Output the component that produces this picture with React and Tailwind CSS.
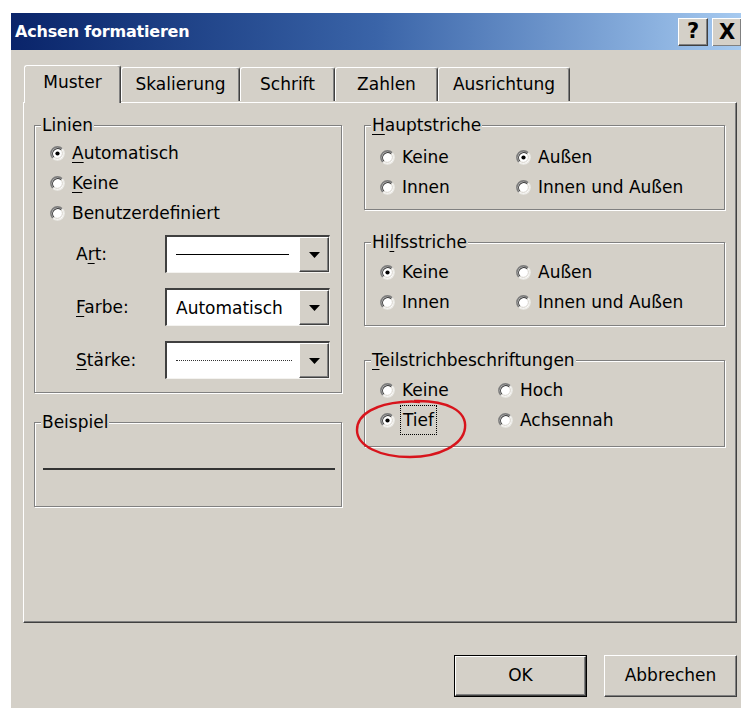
import React from 'react';

// small helper for the underlined access key letter
function Acc({ children }) {
  return <span className="underline underline-offset-[3px] decoration-1">{children}</span>;
}

function RadioDot({ checked }) {
  return (
    <svg width="15" height="15" viewBox="0 0 15 15" className="shrink-0">
      <circle cx="7.5" cy="7.5" r="6.6" fill="#ffffff" />
      <path d="M2.83 12.17 A6.6 6.6 0 0 1 12.17 2.83" stroke="#7c7c7c" strokeWidth="1.6" fill="none" />
      <path d="M3.9 11.1 A5.1 5.1 0 0 1 11.1 3.9" stroke="#3c3c3c" strokeWidth="1.1" fill="none" />
      <path d="M12.17 2.83 A6.6 6.6 0 0 1 2.83 12.17" stroke="#ecebe7" strokeWidth="1.4" fill="none" />
      <path d="M11.1 3.9 A5.1 5.1 0 0 1 3.9 11.1" stroke="#d4d0c8" strokeWidth="1" fill="none" />
      {checked && <circle cx="7.5" cy="7.5" r="2.1" fill="#000000" />}
    </svg>
  );
}

function Radio({ checked, children, gap = 'gap-[7px]' }) {
  return (
    <div className={`h-[30px] flex items-center ${gap}`}>
      <RadioDot checked={checked} />
      <span className="leading-[20px] whitespace-nowrap">{children}</span>
    </div>
  );
}

function Group({ title, className, children }) {
  return (
    <fieldset className={`border border-[#808080] shadow-[inset_1px_1px_0_#ffffff,1px_1px_0_#ffffff] ${className}`}>
      <legend className="ml-[6px] px-[1px] leading-[20px] bg-[#d4d0c8]">{title}</legend>
      {children}
    </fieldset>
  );
}

function DropArrow() {
  return (
    <svg width="11" height="6" viewBox="0 0 11 6">
      <polygon points="0,0 11,0 5.5,6" fill="#000000" />
    </svg>
  );
}

function Combo({ children }) {
  return (
    <div className="w-[165px] h-[38px] flex border-t-2 border-l-2 border-t-[#404040] border-l-[#404040] border-b border-r border-b-[#f4f3f0] border-r-[#f4f3f0] bg-white">
      <div className="flex-1 flex items-center pl-[9px] overflow-hidden">{children}</div>
      <div className="w-[30px] bg-[#d4d0c8] border-t border-l border-white border-r border-b border-r-[#404040] border-b-[#404040] shadow-[inset_-1px_-1px_0_#808080] flex items-center justify-center">
        <DropArrow />
      </div>
    </div>
  );
}

function ComboRow({ label, children }) {
  return (
    <div className="flex items-center pl-[41px]">
      <span className="w-[89px] leading-[20px]">{label}</span>
      <Combo>{children}</Combo>
    </div>
  );
}

function TitleBar() {
  return (
    <div className="h-[37px] shrink-0 flex items-center pl-[4px] bg-linear-to-r from-[#0a246a] via-[#3a64a8] to-[#a6caf0]">
      <span className="text-white font-bold text-[16px] tracking-[-0.2px]">Achsen formatieren</span>
      <div className="ml-auto flex gap-[4px]">
        <div className="w-[30px] h-[28px] bg-[#d4d0c8] border-t border-l border-white border-r border-b border-r-[#404040] border-b-[#404040] shadow-[inset_-1px_-1px_0_#808080] flex items-center justify-center font-bold text-[21px] leading-none">
          ?
        </div>
        <div className="w-[29px] h-[28px] bg-[#d4d0c8] border-t border-l border-white shadow-[inset_-1px_-1px_0_#808080] flex items-center justify-center font-bold text-[21px] leading-none">
          X
        </div>
      </div>
    </div>
  );
}

const tabs = [
  { name: 'Muster', w: 'w-[97px]' },
  { name: 'Skalierung', w: 'w-[119px]' },
  { name: 'Schrift', w: 'w-[95px]' },
  { name: 'Zahlen', w: 'w-[103px]' },
  { name: 'Ausrichtung', w: 'w-[132px]' },
];

function TabStrip() {
  return (
    <div className="relative z-10 mt-[15px] pl-[1px] flex items-end">
      {tabs.map((t, i) =>
        i === 0 ? (
          <div
            key={t.name}
            className={`${t.w} h-[38px] -mb-px bg-[#d4d0c8] rounded-t-[3px] border-t border-l border-white border-r border-r-[#404040] shadow-[inset_-1px_0_0_#808080] flex items-center justify-center pb-[3px]`}
          >
            {t.name}
          </div>
        ) : (
          <div
            key={t.name}
            className={`${t.w} h-[34px] mb-px rounded-t-[3px] border-t border-l border-white border-r border-r-[#404040] shadow-[inset_-1px_0_0_#808080] flex items-center justify-center`}
          >
            {t.name}
          </div>
        )
      )}
    </div>
  );
}

function Panel() {
  return (
    <div className="relative h-[521px] border-t border-l border-white border-r border-b border-r-[#404040] border-b-[#404040] shadow-[inset_-1px_-1px_0_#808080] flex gap-[22px] pl-[10px] pt-[12px]">
      {/* left column */}
      <div className="w-[308px] flex flex-col">
        <Group title="Linien" className="h-[278px]">
          <div className="pl-[15px] pt-[3px]">
            <Radio checked><Acc>A</Acc>utomatisch</Radio>
            <Radio><Acc>K</Acc>eine</Radio>
            <Radio>Benutzerdefiniert</Radio>
          </div>
          <div className="mt-[7px] flex flex-col gap-[15px]">
            <ComboRow label={<>A<Acc>r</Acc>t:</>}>
              <div className="w-[113px] h-px bg-black" />
            </ComboRow>
            <ComboRow label={<><Acc>F</Acc>arbe:</>}>
              <span className="leading-[20px] whitespace-nowrap">Automatisch</span>
            </ComboRow>
            <ComboRow label={<><Acc>S</Acc>tärke:</>}>
              <div className="w-[116px] border-t border-dotted border-[#333333]" />
            </ComboRow>
          </div>
        </Group>
        <Group title="Beispiel" className="mt-[19px] h-[95px]">
          <div className="mt-[36px] ml-[8px] w-[292px] h-[2px] bg-[#333333]" />
        </Group>
      </div>

      {/* right column */}
      <div className="w-[361px] flex flex-col">
        <Group title={<><Acc>H</Acc>auptstriche</>} className="h-[95px]">
          <div className="pl-[15px] pt-[7px] grid grid-cols-[136px_1fr]">
            <Radio>Keine</Radio>
            <Radio checked>Außen</Radio>
            <Radio>Innen</Radio>
            <Radio>Innen und Außen</Radio>
          </div>
        </Group>
        <Group title={<>Hi<Acc>l</Acc>fsstriche</>} className="mt-[22px] h-[94px]">
          <div className="pl-[15px] pt-[5px] grid grid-cols-[136px_1fr]">
            <Radio checked>Keine</Radio>
            <Radio>Außen</Radio>
            <Radio>Innen</Radio>
            <Radio>Innen und Außen</Radio>
          </div>
        </Group>
        <Group title={<><Acc>T</Acc>eilstrichbeschriftungen</>} className="mt-[24px] h-[97px]">
          <div className="pl-[15px] pt-[5px] grid grid-cols-[118px_1fr]">
            <Radio>Keine</Radio>
            <Radio>Hoch</Radio>
            <Radio checked gap="gap-[5px]">
              <span className="border border-dotted border-black px-[2px] py-[4px]">Tief</span>
            </Radio>
            <Radio>Achsennah</Radio>
          </div>
        </Group>
      </div>

      {/* red marker ring drawn over the "Tief" option */}
      <svg
        className="absolute left-[330px] top-[294px] pointer-events-none"
        width="118"
        height="64"
        viewBox="0 0 118 64"
      >
        <path
          d="M60 4 C93 3 113 14 111 31 C109 48 85 60 56 60 C26 60 3 49 3 33 C3 16 24 7 48 5 C54 4.5 60 4.3 66 5"
          stroke="#d8141c"
          strokeWidth="2.4"
          fill="none"
        />
      </svg>
    </div>
  );
}

function DialogButton({ isDefault, children }) {
  if (isDefault) {
    return (
      <div className="border border-black">
        <div className="w-[131px] h-[40px] border-t border-l border-white border-r border-b border-r-[#404040] border-b-[#404040] shadow-[inset_-1px_-1px_0_#808080] flex items-center justify-center">
          {children}
        </div>
      </div>
    );
  }
  return (
    <div className="w-[133px] h-[42px] border-t border-l border-white border-r border-b border-r-[#404040] border-b-[#404040] shadow-[inset_-1px_-1px_0_#808080] flex items-center justify-center">
      {children}
    </div>
  );
}

export default function App() {
  return (
    <div className="w-[741px] h-[708px] overflow-hidden bg-white pt-[13px] pl-[11px] font-['DejaVu_Sans',sans-serif] text-[17px] text-black">
      <div className="h-full flex flex-col bg-[#d4d0c8]">
        <TitleBar />
        <div className="flex-1 flex flex-col pl-[12px] pr-[4px]">
          <TabStrip />
          <Panel />
          <div className="mt-[32px] flex justify-end gap-[17px]">
            <DialogButton isDefault>OK</DialogButton>
            <DialogButton>Abbrechen</DialogButton>
          </div>
        </div>
      </div>
    </div>
  );
}
